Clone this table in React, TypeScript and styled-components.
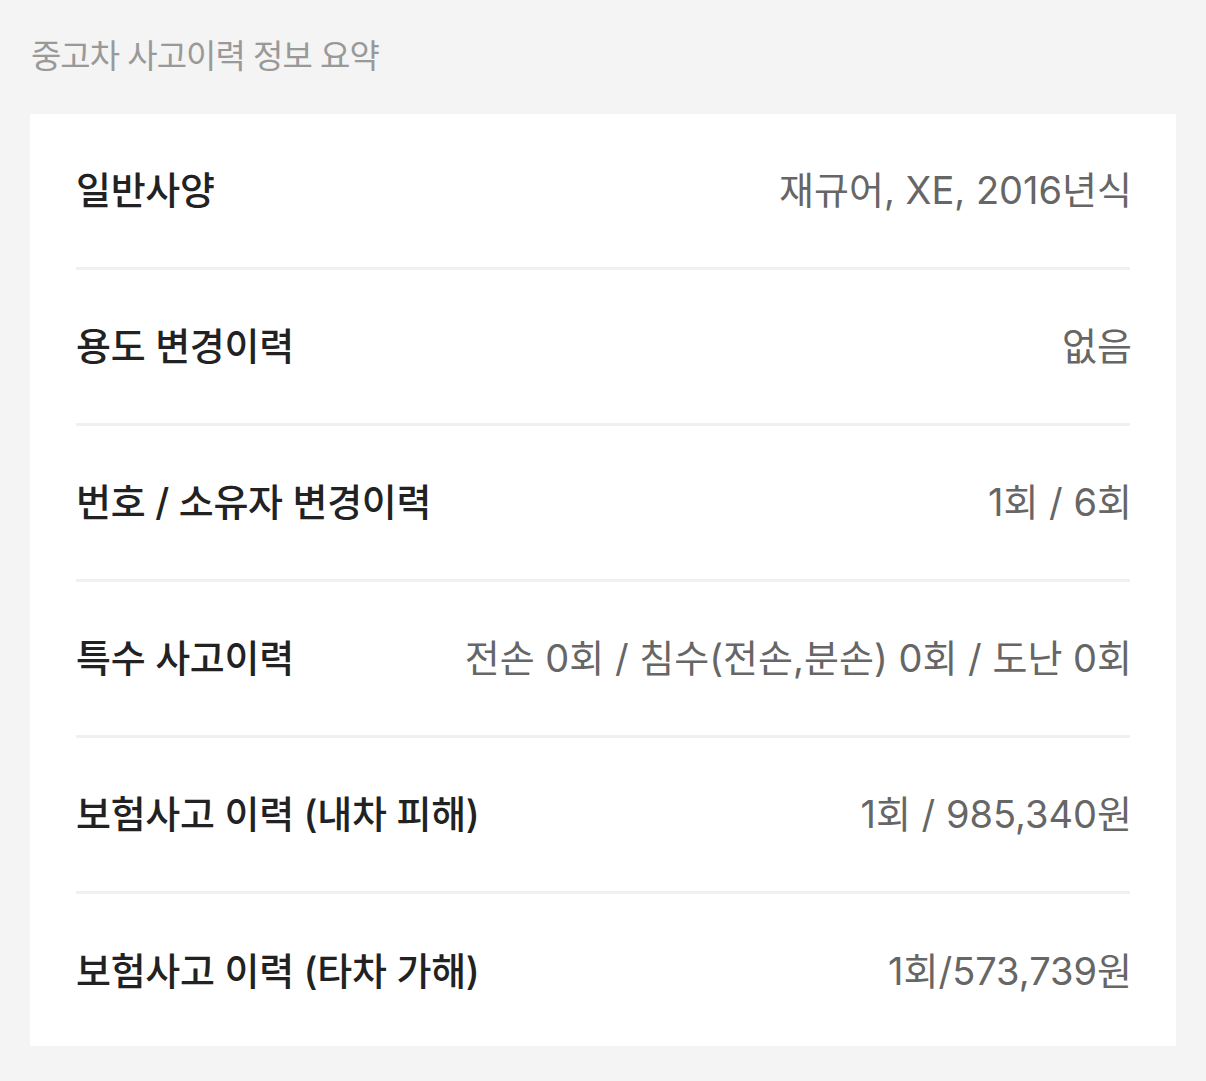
import React from "react";
import styled, { createGlobalStyle } from "styled-components";

const GlobalStyle = createGlobalStyle`
  html, body {
    margin: 0;
    padding: 0;
    background: #f4f4f4;
  }
  * {
    box-sizing: border-box;
  }
`;

type HistoryItem = {
  label: string;
  value: string;
};

const items: HistoryItem[] = [
  { label: "일반사양", value: "재규어, XE, 2016년식" },
  { label: "용도 변경이력", value: "없음" },
  { label: "번호 / 소유자 변경이력", value: "1회 / 6회" },
  {
    label: "특수 사고이력",
    value: "전손 0회 / 침수(전손,분손) 0회 / 도난 0회",
  },
  { label: "보험사고 이력 (내차 피해)", value: "1회 / 985,340원" },
  { label: "보험사고 이력 (타차 가해)", value: "1회/573,739원" },
];

export default function App() {
  return (
    <>
      <GlobalStyle />
      <SPage>
        <STitle>중고차 사고이력 정보 요약</STitle>
        <SCard>
          {items.map((item) => (
            <SRow key={item.label}>
              <SLabel>{item.label}</SLabel>
              <SValue>{item.value}</SValue>
            </SRow>
          ))}
        </SCard>
      </SPage>
    </>
  );
}

const SPage = styled.div`
  min-height: 100vh;
  padding: 34px 30px 34px;
  background: #f4f4f4;
  font-family: Inter, "Noto Sans CJK KR", "Noto Sans", sans-serif;
`;

const STitle = styled.h2`
  margin: 0 0 36px;
  padding-left: 1px;
  font-size: 33px;
  line-height: 44px;
  font-weight: 400;
  letter-spacing: -1px;
  color: #999;
`;

const SCard = styled.ul`
  margin: 0;
  padding: 0 46px;
  list-style: none;
  background: #fff;
`;

const SRow = styled.li`
  display: flex;
  align-items: center;
  justify-content: space-between;
  height: 156px;
  padding-bottom: 6px;
  border-bottom: 3px solid #f0f0f0;
  &:last-child {
    height: 152px;
    padding-bottom: 4px;
    border-bottom: none;
  }
`;

const SLabel = styled.span`
  font-size: 38px;
  font-weight: 500;
  letter-spacing: -0.3px;
  color: #222;
`;

const SValue = styled.span`
  margin-right: -2px;
  font-size: 38px;
  font-weight: 400;
  letter-spacing: 0;
  color: #666;
`;
